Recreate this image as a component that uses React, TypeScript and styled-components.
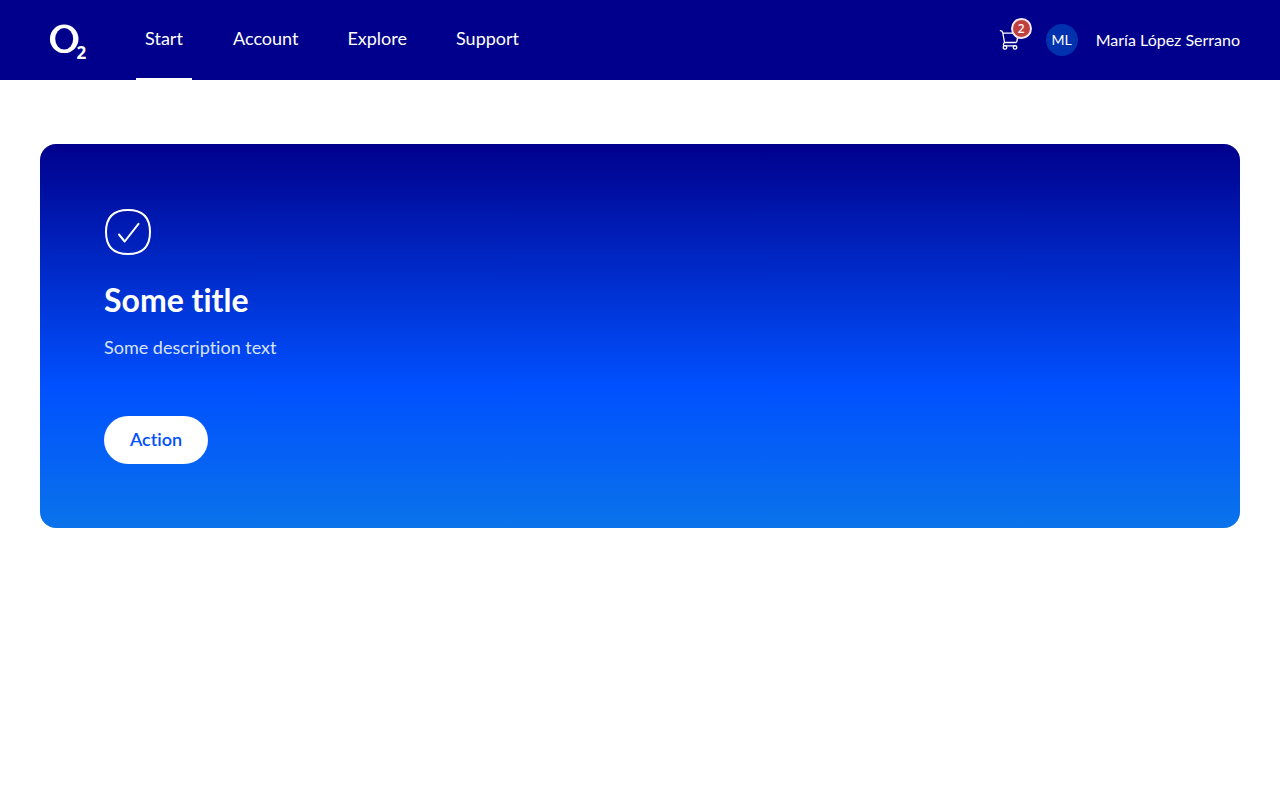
import React from 'react';
import styled, { createGlobalStyle } from 'styled-components';

const GlobalStyle = createGlobalStyle`
  * { box-sizing: border-box; }
  body {
    margin: 0;
    background: #ffffff;
    color: #ffffff;
    font-family: Lato, "Noto Sans", sans-serif;
    font-variant-ligatures: none;
  }
`;

const Header = styled.header`
  display: flex;
  align-items: center;
  justify-content: space-between;
  height: 80px;
  padding: 0 40px;
  background: #00008c;
`;

const Side = styled.div`
  display: flex;
  align-items: center;
  gap: 40px;
`;

const LogoLink = styled.a`
  display: flex;
`;

const Nav = styled.nav`
  display: flex;
  gap: 33px;
`;

const NavLink = styled.a<{ $active?: boolean }>`
  display: flex;
  align-items: center;
  justify-content: center;
  min-width: 56px;
  height: 80px;
  padding: 0 8px 2px;
  border-bottom: 2px solid ${(p) => (p.$active ? '#ffffff' : 'transparent')};
  color: #ffffff;
  font-size: 18px;
  line-height: 24px;
  text-decoration: none;
`;

const Account = styled.div`
  display: flex;
  align-items: center;
  gap: 24px;
`;

const CartButton = styled.button`
  position: relative;
  display: flex;
  padding: 0;
  border: 0;
  background: none;
  color: #ffffff;
`;

const Badge = styled.span`
  position: absolute;
  top: -10px;
  right: -10px;
  width: 21px;
  height: 21px;
  border: 2px solid #f3e8ee;
  border-radius: 50%;
  background: #c0403f;
  font-family: "Noto Sans", sans-serif;
  font-size: 12px;
  font-weight: 500;
  line-height: 17px;
  text-align: center;
`;

const Profile = styled.a`
  display: flex;
  align-items: center;
  gap: 18px;
  color: #ffffff;
  font-size: 16px;
  line-height: 24px;
  text-decoration: none;
`;

const Avatar = styled.span`
  width: 32px;
  height: 32px;
  border-radius: 50%;
  background: #0032af;
  font-size: 14px;
  line-height: 32px;
  text-align: center;
`;

const Main = styled.main`
  padding: 64px 40px;
`;

const Card = styled.section`
  display: flex;
  flex-direction: column;
  align-items: flex-start;
  padding: 64px;
  border-radius: 16px;
  background: linear-gradient(180deg, #00008c 0%, #0050ff 63%, #0a73ea 100%);
`;

const Title = styled.h1`
  margin: 24px 0 16px;
  font-size: 32px;
  font-weight: 700;
  line-height: 40px;
`;

const Description = styled.p`
  margin: 0 0 58px;
  color: #d9e3fb;
  font-size: 18px;
  line-height: 22px;
`;

const ActionButton = styled.button`
  height: 48px;
  min-width: 104px;
  padding: 0 24px 2px;
  border: 0;
  border-radius: 24px;
  background: #ffffff;
  color: #0050ff;
  font-family: inherit;
  font-size: 18px;
  font-weight: 600;
  font-variant-ligatures: none;
  line-height: 24px;
`;

const links = ['Start', 'Account', 'Explore', 'Support'];

function Logo() {
  return (
    <svg width="56" height="56" viewBox="0 0 56 56" role="img" aria-label="O2">
      <ellipse cx="24.2" cy="26.8" rx="14.3" ry="14.3" fill="#fff" />
      <ellipse cx="24.2" cy="26.8" rx="9" ry="10.8" fill="#00008c" />
      <text x="36.5" y="47" fill="#fff" fontFamily="Noto Sans, sans-serif" fontWeight="700" fontSize="17">2</text>
    </svg>
  );
}

function CartIcon() {
  return (
    <svg width="24" height="24" viewBox="0 0 24 24" fill="none" stroke="currentColor" strokeWidth="1.3" strokeLinecap="round" strokeLinejoin="round" aria-hidden="true">
      <path d="M2.4 2.7C4 2.6 4.5 3.2 4.8 4.9L6.5 14.5H17.6C18.3 14.5 18.6 14.1 18.8 13.5L20.3 6.2C20.4 5.5 20.1 5.2 19.5 5.2H5" />
      <path d="M6.5 14.5C5 15.5 5 17.8 6.8 17.8H17.2" />
      <circle cx="7" cy="19.4" r="1.8" />
      <circle cx="17" cy="19.4" r="1.8" />
    </svg>
  );
}

function CheckIcon() {
  return (
    <svg width="48" height="48" viewBox="0 0 48 48" fill="none" stroke="#fff" strokeWidth="2" strokeLinecap="round" strokeLinejoin="round" aria-hidden="true">
      <path d="M24 2C38.500 2 46 9.500 46 24S38.500 46 24 46S2 38.500 2 24S9.500 2 24 2Z" />
      <path d="M15 26.500L20.700 33.500L34.500 15.800" />
    </svg>
  );
}

export default function App() {
  return (
    <>
      <GlobalStyle />
      <Header>
        <Side>
          <LogoLink href="#"><Logo /></LogoLink>
          <Nav>
            {links.map((label, i) => (
              <NavLink key={label} href="#" $active={i === 0}>{label}</NavLink>
            ))}
          </Nav>
        </Side>
        <Account>
          <CartButton type="button" aria-label="Cart, 2 items">
            <CartIcon />
            <Badge>2</Badge>
          </CartButton>
          <Profile href="#">
            <Avatar>ML</Avatar>
            <span>María López Serrano</span>
          </Profile>
        </Account>
      </Header>
      <Main>
        <Card>
          <CheckIcon />
          <Title>Some title</Title>
          <Description>Some description text</Description>
          <ActionButton type="button">Action</ActionButton>
        </Card>
      </Main>
    </>
  );
}
